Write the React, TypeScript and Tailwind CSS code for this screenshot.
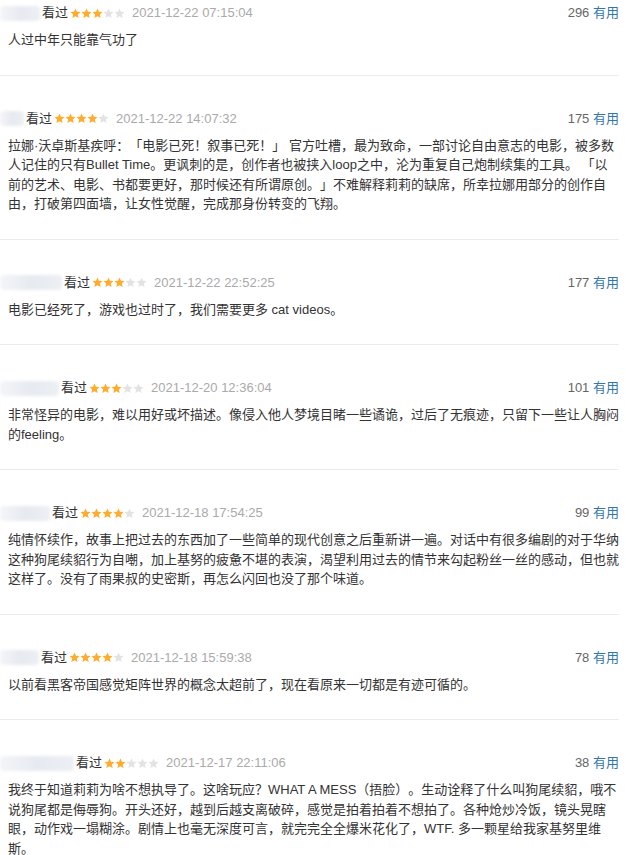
import React from "react";

interface Comment {
    id: number;
    nameWidth: string;
    stars: number;
    time: string;
    votes: number;
    text: string;
}

const comments: Comment[] = [
    {
        id: 1,
        nameWidth: "w-[40px]",
        stars: 3,
        time: "2021-12-22 07:15:04",
        votes: 296,
        text: "人过中年只能靠气功了",
    },
    {
        id: 2,
        nameWidth: "w-[24px]",
        stars: 4,
        time: "2021-12-22 14:07:32",
        votes: 175,
        text: "拉娜·沃卓斯基疾呼：「电影已死！叙事已死！」 官方吐槽，最为致命，一部讨论自由意志的电影，被多数人记住的只有Bullet Time。更讽刺的是，创作者也被挟入loop之中，沦为重复自己炮制续集的工具。 「以前的艺术、电影、书都要更好，那时候还有所谓原创。」不难解释莉莉的缺席，所幸拉娜用部分的创作自由，打破第四面墙，让女性觉醒，完成那身份转变的飞翔。",
    },
    {
        id: 3,
        nameWidth: "w-[62px]",
        stars: 3,
        time: "2021-12-22 22:52:25",
        votes: 177,
        text: "电影已经死了，游戏也过时了，我们需要更多 cat videos。",
    },
    {
        id: 4,
        nameWidth: "w-[59px]",
        stars: 3,
        time: "2021-12-20 12:36:04",
        votes: 101,
        text: "非常怪异的电影，难以用好或坏描述。像侵入他人梦境目睹一些谲诡，过后了无痕迹，只留下一些让人胸闷的feeling。",
    },
    {
        id: 5,
        nameWidth: "w-[50px]",
        stars: 4,
        time: "2021-12-18 17:54:25",
        votes: 99,
        text: "纯情怀续作，故事上把过去的东西加了一些简单的现代创意之后重新讲一遍。对话中有很多编剧的对于华纳这种狗尾续貂行为自嘲，加上基努的疲惫不堪的表演，渴望利用过去的情节来勾起粉丝一丝的感动，但也就这样了。没有了雨果叔的史密斯，再怎么闪回也没了那个味道。",
    },
    {
        id: 6,
        nameWidth: "w-[39px]",
        stars: 4,
        time: "2021-12-18 15:59:38",
        votes: 78,
        text: "以前看黑客帝国感觉矩阵世界的概念太超前了，现在看原来一切都是有迹可循的。",
    },
    {
        id: 7,
        nameWidth: "w-[74px]",
        stars: 2,
        time: "2021-12-17 22:11:06",
        votes: 38,
        text: "我终于知道莉莉为啥不想执导了。这啥玩应？WHAT A MESS（捂脸）。生动诠释了什么叫狗尾续貂，哦不说狗尾都是侮辱狗。开头还好，越到后越支离破碎，感觉是拍着拍着不想拍了。各种炝炒冷饭，镜头晃瞎眼，动作戏一塌糊涂。剧情上也毫无深度可言，就完完全全爆米花化了，WTF. 多一颗星给我家基努里维斯。",
    },
];

const Star = ({ on }: { on: boolean }) => (
    <svg width="11" height="11" viewBox="0 0 24 24" className="block">
        <path
            d="M12 1l3.2 7.2 7.8.7-5.9 5.2 1.8 7.7L12 17.8l-6.9 4 1.8-7.7-5.9-5.2 7.8-.7z"
            fill={on ? "#ffac2d" : "#e3e3e3"}
        />
    </svg>
);

const Stars = ({ n }: { n: number }) => (
    <span className="flex items-center mx-[2px]">
        {[1, 2, 3, 4, 5].map((i) => (
            <Star key={i} on={i <= n} />
        ))}
    </span>
);

const CommentItem = ({ c, first }: { c: Comment; first: boolean }) => (
    <div className={`${first ? "pt-[3px]" : "pt-[33px]"} pb-[25px] border-b border-[#ececec]`}>
        {/* header */}
        <div className="flex items-center h-[20px]">
            <div className={`${c.nameWidth} h-[15px] flex items-center`}>
                <div className="w-full h-full rounded-sm bg-gradient-to-r from-[#f4f5f8] via-[#e6eaf0] to-[#eceff3] blur-[1.5px]" />
            </div>
            <span className="text-[#333] ml-[2px]">看过</span>
            <Stars n={c.stars} />
            <span className="text-[#aaa] ml-[5px]">{c.time}</span>
            <span className="ml-auto text-[#666]">
                {c.votes} <span className="text-[#37a]">有用</span>
            </span>
        </div>
        {/* body */}
        <p className="mt-[7px] pl-[8px] leading-[19.5px] text-[#333] [text-spacing-trim:space-all]">{c.text}</p>
    </div>
);

export default function App() {
    return (
        <div className="w-[626px] h-[855px] overflow-hidden bg-white text-[13px] font-['Liberation_Sans','Noto_Sans_CJK_SC',sans-serif]">
            <div className="pr-[7px]">
                {comments.map((c, i) => (
                    <CommentItem key={c.id} c={c} first={i === 0} />
                ))}
            </div>
        </div>
    );
}
